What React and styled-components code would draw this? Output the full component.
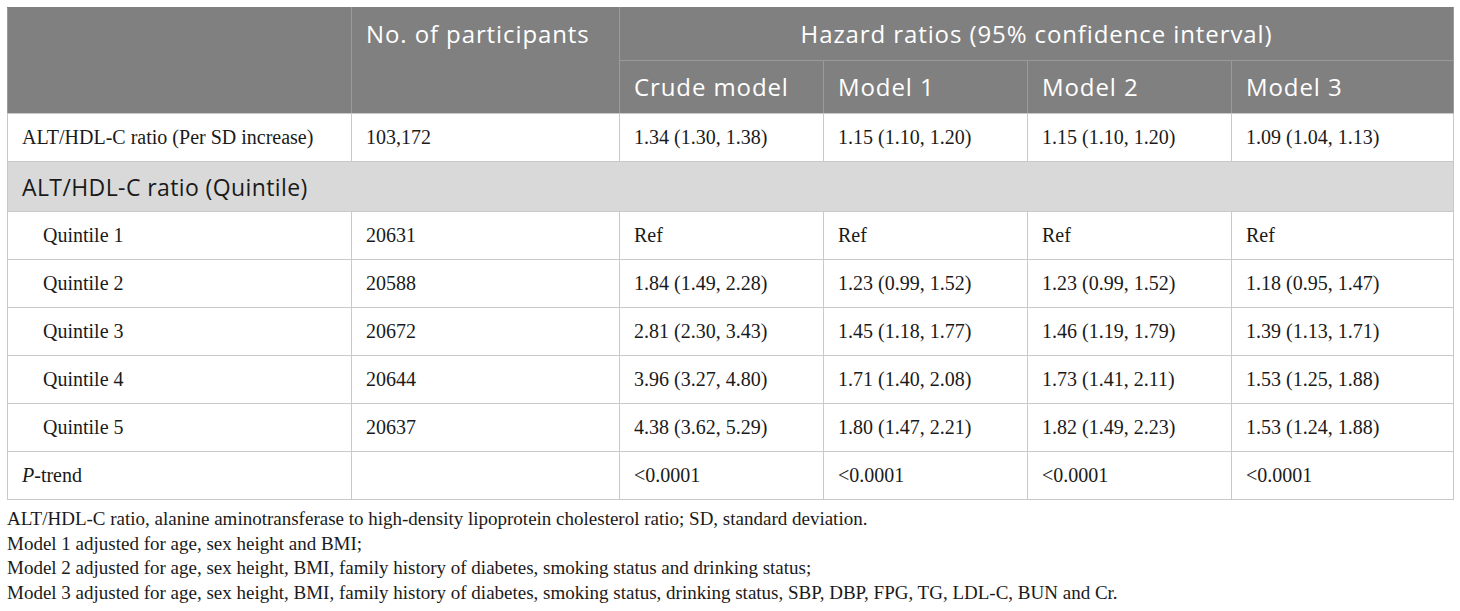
import React from 'react'
import styled, { createGlobalStyle } from 'styled-components'

const GlobalStyle = createGlobalStyle`
  body {
    margin: 0;
    background: #fff;
  }
`

const Wrapper = styled.div`
  padding: 7px 7px 0 7px;
  font-family: 'Liberation Serif', 'Times New Roman', serif;
  color: #1a1a1a;
`

const Table = styled.table`
  width: 1446px;
  border-collapse: collapse;
  table-layout: fixed;
  border: 1px solid #c9c9c9;
`

const HeadCell = styled.th`
  background: #808080;
  color: #fff;
  font-family: 'Open Sans', 'Liberation Sans', sans-serif;
  font-weight: 400;
  font-size: 24px;
  letter-spacing: 0.9px;
  text-align: ${props => (props.$center ? 'center' : 'left')};
  vertical-align: top;
  padding: 0 14px;
  height: ${props => props.$h || 52}px;
  line-height: 52px;
  white-space: nowrap;
  border: 1px solid #9a9a9a;
  border-top-color: #808080;
  border-bottom-color: ${props => (props.$last ? '#c9c9c9' : '#9a9a9a')};
`

const Row = styled.tr`
  height: 48px;
`

const Cell = styled.td`
  font-size: 20px;
  padding: 0 14px 0 ${props => (props.$indent ? 35 : 14)}px;
  border: 1px solid #c9c9c9;
  vertical-align: middle;
  white-space: nowrap;
`

const GroupCell = styled.td`
  background: #d9d9d9;
  font-family: 'Open Sans', 'Liberation Sans', sans-serif;
  font-size: 23px;
  letter-spacing: 0.4px;
  padding: 0 14px;
  height: 49px;
  border: 1px solid #c9c9c9;
`

const Notes = styled.div`
  margin-top: 7px;
  font-size: 19px;
  line-height: 24.5px;
`

const cols = [344, 268, 204, 204, 204, 222]

const rows = [
  ['Quintile 1', '20631', 'Ref', 'Ref', 'Ref', 'Ref'],
  ['Quintile 2', '20588', '1.84 (1.49, 2.28)', '1.23 (0.99, 1.52)', '1.23 (0.99, 1.52)', '1.18 (0.95, 1.47)'],
  ['Quintile 3', '20672', '2.81 (2.30, 3.43)', '1.45 (1.18, 1.77)', '1.46 (1.19, 1.79)', '1.39 (1.13, 1.71)'],
  ['Quintile 4', '20644', '3.96 (3.27, 4.80)', '1.71 (1.40, 2.08)', '1.73 (1.41, 2.11)', '1.53 (1.25, 1.88)'],
  ['Quintile 5', '20637', '4.38 (3.62, 5.29)', '1.80 (1.47, 2.21)', '1.82 (1.49, 2.23)', '1.53 (1.24, 1.88)'],
]

const notes = [
  'ALT/HDL-C ratio, alanine aminotransferase to high-density lipoprotein cholesterol ratio; SD, standard deviation.',
  'Model 1 adjusted for age, sex height and BMI;',
  'Model 2 adjusted for age, sex height, BMI, family history of diabetes, smoking status and drinking status;',
  'Model 3 adjusted for age, sex height, BMI, family history of diabetes, smoking status, drinking status, SBP, DBP, FPG, TG, LDL-C, BUN and Cr.',
]

const App = () => (
  <Wrapper>
    <GlobalStyle />
    <Table>
      <colgroup>
        {cols.map((w, i) => <col key={i} style={{ width: w }} />)}
      </colgroup>
      <thead>
        <tr>
          <HeadCell rowSpan={2} $last />
          <HeadCell rowSpan={2} $last>No. of participants</HeadCell>
          <HeadCell colSpan={4} $center>Hazard ratios (95% confidence interval)</HeadCell>
        </tr>
        <tr>
          <HeadCell $h={51} $last>Crude model</HeadCell>
          <HeadCell $h={51} $last>Model 1</HeadCell>
          <HeadCell $h={51} $last>Model 2</HeadCell>
          <HeadCell $h={51} $last>Model 3</HeadCell>
        </tr>
      </thead>
      <tbody>
        <Row>
          <Cell>ALT/HDL-C ratio (Per SD increase)</Cell>
          <Cell>103,172</Cell>
          <Cell>1.34 (1.30, 1.38)</Cell>
          <Cell>1.15 (1.10, 1.20)</Cell>
          <Cell>1.15 (1.10, 1.20)</Cell>
          <Cell>1.09 (1.04, 1.13)</Cell>
        </Row>
        <tr>
          <GroupCell colSpan={6}>ALT/HDL-C ratio (Quintile)</GroupCell>
        </tr>
        {rows.map(r => (
          <Row key={r[0]}>
            <Cell $indent>{r[0]}</Cell>
            {r.slice(1).map((v, i) => <Cell key={i}>{v}</Cell>)}
          </Row>
        ))}
        <Row>
          <Cell><i>P</i>-trend</Cell>
          <Cell />
          <Cell>&lt;0.0001</Cell>
          <Cell>&lt;0.0001</Cell>
          <Cell>&lt;0.0001</Cell>
          <Cell>&lt;0.0001</Cell>
        </Row>
      </tbody>
    </Table>
    <Notes>
      {notes.map(n => <div key={n}>{n}</div>)}
    </Notes>
  </Wrapper>
)

export default App
